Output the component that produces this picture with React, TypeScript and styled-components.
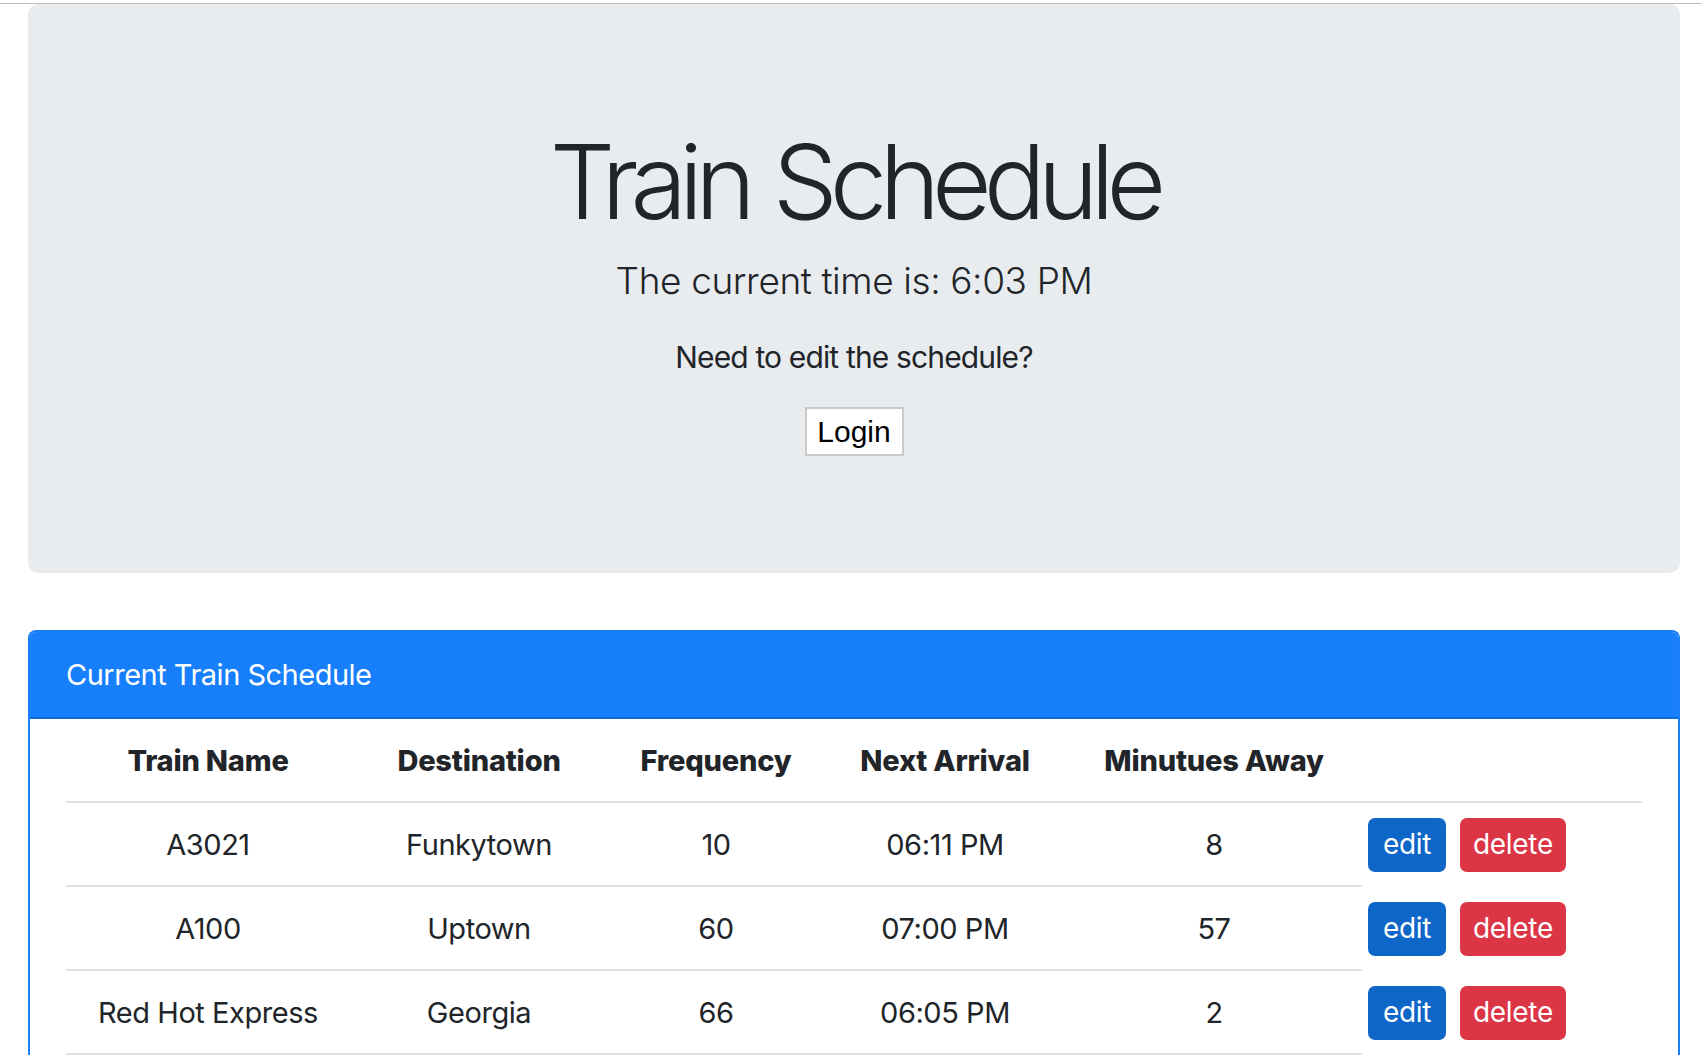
import React from "react";
import styled, { createGlobalStyle } from "styled-components";

const GlobalStyle = createGlobalStyle`
  html, body { margin: 0; padding: 0; background: #ffffff; }
  body {
    font-family: Inter, "Noto Sans", "Liberation Sans", sans-serif;
    color: #212529;
  }
  * { box-sizing: border-box; }
`;

const TopRule = styled.div`
  margin-top: 3px;
  height: 1px;
  background: #bdbdbd;
`;

const Page = styled.main`
  padding: 0 22px 0 28px;
`;

const Jumbotron = styled.section`
  height: 569px;
  background: #e9ecef;
  border-radius: 10px;
  display: flex;
  flex-direction: column;
  align-items: center;
  padding-top: 116px;
`;

const Title = styled.h1`
  margin: 0;
  font-size: 103px;
  font-weight: 300;
  line-height: 1.2;
  letter-spacing: -8px;
  word-spacing: 4px;
`;

const Lead = styled.p`
  margin: 9px 0 0;
  font-size: 37px;
  font-weight: 300;
  line-height: 1.5;
  letter-spacing: -0.4px;
`;

const Prompt = styled.p`
  margin: 27px 0 0;
  font-size: 30px;
  font-weight: 400;
  line-height: 1.5;
  letter-spacing: -0.85px;
`;

const LoginButton = styled.button`
  margin-top: 27px;
  height: 49px;
  width: 99px;
  background: #ffffff;
  border: 2px solid #cacaca;
  border-radius: 0;
  font-family: "Liberation Sans", Arial, sans-serif;
  font-size: 30px;
  color: #000;
  padding: 0;
  cursor: pointer;
`;

const Card = styled.section`
  margin-top: 57px;
  border: 2px solid #1a7ff9;
  border-bottom: none;
  border-radius: 8px 8px 0 0;
  overflow: hidden;
`;

const CardHeader = styled.header`
  height: 87px;
  background: #177ffb;
  border-bottom: 2px solid #0f6cd9;
  color: #ffffff;
  font-size: 29px;
  letter-spacing: -0.5px;
  display: flex;
  align-items: center;
  padding-left: 36px;
`;

const Table = styled.div`
  margin: 0 36px;
  display: grid;
  grid-template-columns: 284px 258px 216px 242px 296px 1fr;
`;

const HeadCell = styled.div`
  height: 84px;
  border-bottom: 2px solid #dee2e6;
  display: flex;
  align-items: center;
  justify-content: center;
  font-size: 29px;
  font-weight: 800;
  letter-spacing: -0.2px;
`;

const Cell = styled.div`
  height: 84px;
  border-bottom: 2px solid #dee2e6;
  display: flex;
  align-items: center;
  justify-content: center;
  font-size: 29px;
  font-weight: 400;
  letter-spacing: -0.45px;
`;

const ActionCell = styled.div`
  height: 84px;
  display: flex;
  align-items: center;
  gap: 14px;
  padding-left: 6px;
`;

const ActionButton = styled.button<{ $variant: "edit" | "delete" }>`
  height: 54px;
  padding: 0 0 3px;
  width: ${(p) => (p.$variant === "edit" ? "78px" : "106px")};
  border: none;
  border-radius: 7px;
  background: ${(p) => (p.$variant === "edit" ? "#0f66c9" : "#dc3545")};
  color: #ffffff;
  font-family: Inter, "Noto Sans", sans-serif;
  font-size: 28px;
  font-weight: 400;
  letter-spacing: -0.3px;
  line-height: 1;
  cursor: pointer;
`;

const trains = [
  { name: "A3021", dest: "Funkytown", freq: "10", next: "06:11 PM", away: "8" },
  { name: "A100", dest: "Uptown", freq: "60", next: "07:00 PM", away: "57" },
  { name: "Red Hot Express", dest: "Georgia", freq: "66", next: "06:05 PM", away: "2" },
];

const headings = ["Train Name", "Destination", "Frequency", "Next Arrival", "Minutues Away", ""];

export default function App() {
  return (
    <>
      <GlobalStyle />
      <TopRule />
      <Page>
        <Jumbotron>
          <Title>Train Schedule</Title>
          <Lead>The current time is: 6:03 PM</Lead>
          <Prompt>Need to edit the schedule?</Prompt>
          <LoginButton>Login</LoginButton>
        </Jumbotron>
        <Card>
          <CardHeader>Current Train Schedule</CardHeader>
          <Table>
            {headings.map((h, i) => (
              <HeadCell key={i}>{h}</HeadCell>
            ))}
            {trains.map((t) => (
              <React.Fragment key={t.name}>
                <Cell>{t.name}</Cell>
                <Cell>{t.dest}</Cell>
                <Cell>{t.freq}</Cell>
                <Cell>{t.next}</Cell>
                <Cell>{t.away}</Cell>
                <ActionCell>
                  <ActionButton $variant="edit">edit</ActionButton>
                  <ActionButton $variant="delete">delete</ActionButton>
                </ActionCell>
              </React.Fragment>
            ))}
          </Table>
        </Card>
      </Page>
    </>
  );
}
